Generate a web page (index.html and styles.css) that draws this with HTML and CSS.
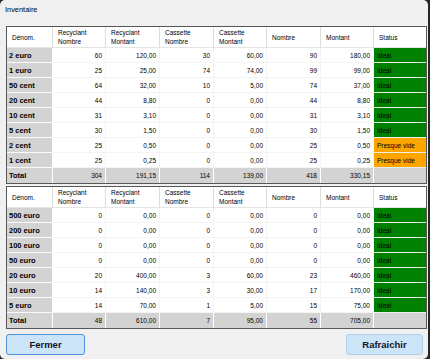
FILE: index.html
```html
<!DOCTYPE html>
<html lang="fr">
<head>
<meta charset="utf-8">
<title>Inventaire</title>
<link rel="stylesheet" href="styles.css">
</head>
<body>
<div class="window">
  <div class="title">Inventaire</div>

  <!-- Pièces -->
  <div class="grid coins">
    <div class="h">Dénom.</div>
    <div class="h">Recyclant<br>Nombre</div>
    <div class="h">Recyclant<br>Montant</div>
    <div class="h">Cassette<br>Nombre</div>
    <div class="h">Cassette<br>Montant</div>
    <div class="h">Nombre</div>
    <div class="h">Montant</div>
    <div class="h last">Status</div>

    <div class="d">2 euro</div><div class="n">60</div><div class="n">120,00</div><div class="n">30</div><div class="n">60,00</div><div class="n">90</div><div class="n">180,00</div><div class="s ok">Ideal</div>
    <div class="d">1 euro</div><div class="n">25</div><div class="n">25,00</div><div class="n">74</div><div class="n">74,00</div><div class="n">99</div><div class="n">99,00</div><div class="s ok">Ideal</div>
    <div class="d">50 cent</div><div class="n">64</div><div class="n">32,00</div><div class="n">10</div><div class="n">5,00</div><div class="n">74</div><div class="n">37,00</div><div class="s ok">Ideal</div>
    <div class="d">20 cent</div><div class="n">44</div><div class="n">8,80</div><div class="n">0</div><div class="n">0,00</div><div class="n">44</div><div class="n">8,80</div><div class="s ok">Ideal</div>
    <div class="d">10 cent</div><div class="n">31</div><div class="n">3,10</div><div class="n">0</div><div class="n">0,00</div><div class="n">31</div><div class="n">3,10</div><div class="s ok">Ideal</div>
    <div class="d">5 cent</div><div class="n">30</div><div class="n">1,50</div><div class="n">0</div><div class="n">0,00</div><div class="n">30</div><div class="n">1,50</div><div class="s ok">Ideal</div>
    <div class="d">2 cent</div><div class="n">25</div><div class="n">0,50</div><div class="n">0</div><div class="n">0,00</div><div class="n">25</div><div class="n">0,50</div><div class="s low">Presque vide</div>
    <div class="d">1 cent</div><div class="n">25</div><div class="n">0,25</div><div class="n">0</div><div class="n">0,00</div><div class="n">25</div><div class="n">0,25</div><div class="s low">Presque vide</div>

    <div class="d t">Total</div><div class="n t">304</div><div class="n t">191,15</div><div class="n t">114</div><div class="n t">139,00</div><div class="n t">418</div><div class="n t">330,15</div><div class="s t"></div>
  </div>

  <!-- Billets -->
  <div class="grid notes">
    <div class="h">Dénom.</div>
    <div class="h">Recyclant<br>Nombre</div>
    <div class="h">Recyclant<br>Montant</div>
    <div class="h">Cassette<br>Nombre</div>
    <div class="h">Cassette<br>Montant</div>
    <div class="h">Nombre</div>
    <div class="h">Montant</div>
    <div class="h last">Status</div>

    <div class="d">500 euro</div><div class="n">0</div><div class="n">0,00</div><div class="n">0</div><div class="n">0,00</div><div class="n">0</div><div class="n">0,00</div><div class="s ok">Ideal</div>
    <div class="d">200 euro</div><div class="n">0</div><div class="n">0,00</div><div class="n">0</div><div class="n">0,00</div><div class="n">0</div><div class="n">0,00</div><div class="s ok">Ideal</div>
    <div class="d">100 euro</div><div class="n">0</div><div class="n">0,00</div><div class="n">0</div><div class="n">0,00</div><div class="n">0</div><div class="n">0,00</div><div class="s ok">Ideal</div>
    <div class="d">50 euro</div><div class="n">0</div><div class="n">0,00</div><div class="n">0</div><div class="n">0,00</div><div class="n">0</div><div class="n">0,00</div><div class="s ok">Ideal</div>
    <div class="d">20 euro</div><div class="n">20</div><div class="n">400,00</div><div class="n">3</div><div class="n">60,00</div><div class="n">23</div><div class="n">460,00</div><div class="s ok">Ideal</div>
    <div class="d">10 euro</div><div class="n">14</div><div class="n">140,00</div><div class="n">3</div><div class="n">30,00</div><div class="n">17</div><div class="n">170,00</div><div class="s ok">Ideal</div>
    <div class="d">5 euro</div><div class="n">14</div><div class="n">70,00</div><div class="n">1</div><div class="n">5,00</div><div class="n">15</div><div class="n">75,00</div><div class="s ok">Ideal</div>

    <div class="d t">Total</div><div class="n t">48</div><div class="n t">610,00</div><div class="n t">7</div><div class="n t">95,00</div><div class="n t">55</div><div class="n t">705,00</div><div class="s t"></div>
  </div>

  <div class="actions">
    <button class="btn primary">Fermer</button>
    <button class="btn">Rafraichir</button>
  </div>
</div>
</body>
</html>
```

FILE: styles.css
```css
* {
  box-sizing: border-box;
}

html,
body {
  margin: 0;
  padding: 0;
  background: #262626;
}

body {
  width: 430px;
  height: 359px;
  overflow: hidden;
  font-family: "Liberation Sans", Arial, sans-serif;
  color: #000;
}

/* dialog window */
.window {
  width: 428px;
  height: 359px;
  background: #f0f0f0;
  border-radius: 5px;
  display: flex;
  flex-direction: column;
}

.title {
  height: 26px;
  line-height: 20px;
  padding-left: 5px;
  font-size: 7.4px;
}

/* data grids */
.grid {
  margin-left: 6px;
  width: 421px;
  border: 1px solid #575757;
  background: #fff;
  display: grid;
  grid-template-columns: 46px 53px 54px 54px 53px 54px 53px 52px;
}

.coins {
  grid-template-rows: 21px repeat(9, 15px);
}

.notes {
  margin-top: 2px;
  grid-template-rows: 21px repeat(8, 15px);
}

.grid > div {
  display: flex;
  align-items: center;
  white-space: nowrap;
  font-size: 6.5px;
  border-right: 1px solid #f4f4f4;
  border-bottom: 1px solid #f4f4f4;
}

/* column headers */
.grid > .h {
  background: #fff;
  padding-left: 5px;
  line-height: 9px;
  border-right-color: #dcdcdc;
  border-bottom-color: #e4e4e4;
}

.grid > .h.last {
  border-right: none;
}

/* denomination column */
.grid > .d {
  background: #d3d3d3;
  font-weight: bold;
  font-size: 7.5px;
  padding-left: 2px;
  border-bottom-color: #fbfbfb;
  border-right-color: #fff;
}

/* numeric cells */
.grid > .n {
  justify-content: flex-end;
  padding-right: 3px;
}

/* status column */
.grid > .s {
  padding-left: 3px;
  border-right: none;
  border-bottom-color: #e9efe9;
}

.grid > .ok {
  background: #008000;
}

.grid > .low {
  background: #ffa500;
}

/* totals row */
.grid > .t {
  background: #d3d3d3;
  border-bottom: none;
  border-right-color: #fff;
}

.grid > .s.t {
  border-right: none;
}

/* buttons */
.actions {
  margin-top: 5px;
  padding: 0 5px 0 6px;
  display: flex;
  justify-content: space-between;
}

.btn {
  height: 21px;
  width: 77px;
  padding: 0;
  background: #cce4f7;
  border: 1px solid #b4cfe8;
  border-radius: 3px;
  font-family: "Liberation Sans", Arial, sans-serif;
  font-weight: bold;
  font-size: 9.5px;
  color: #141428;
}

.btn.primary {
  width: 79px;
  border-color: #4d94d8;
}
```
